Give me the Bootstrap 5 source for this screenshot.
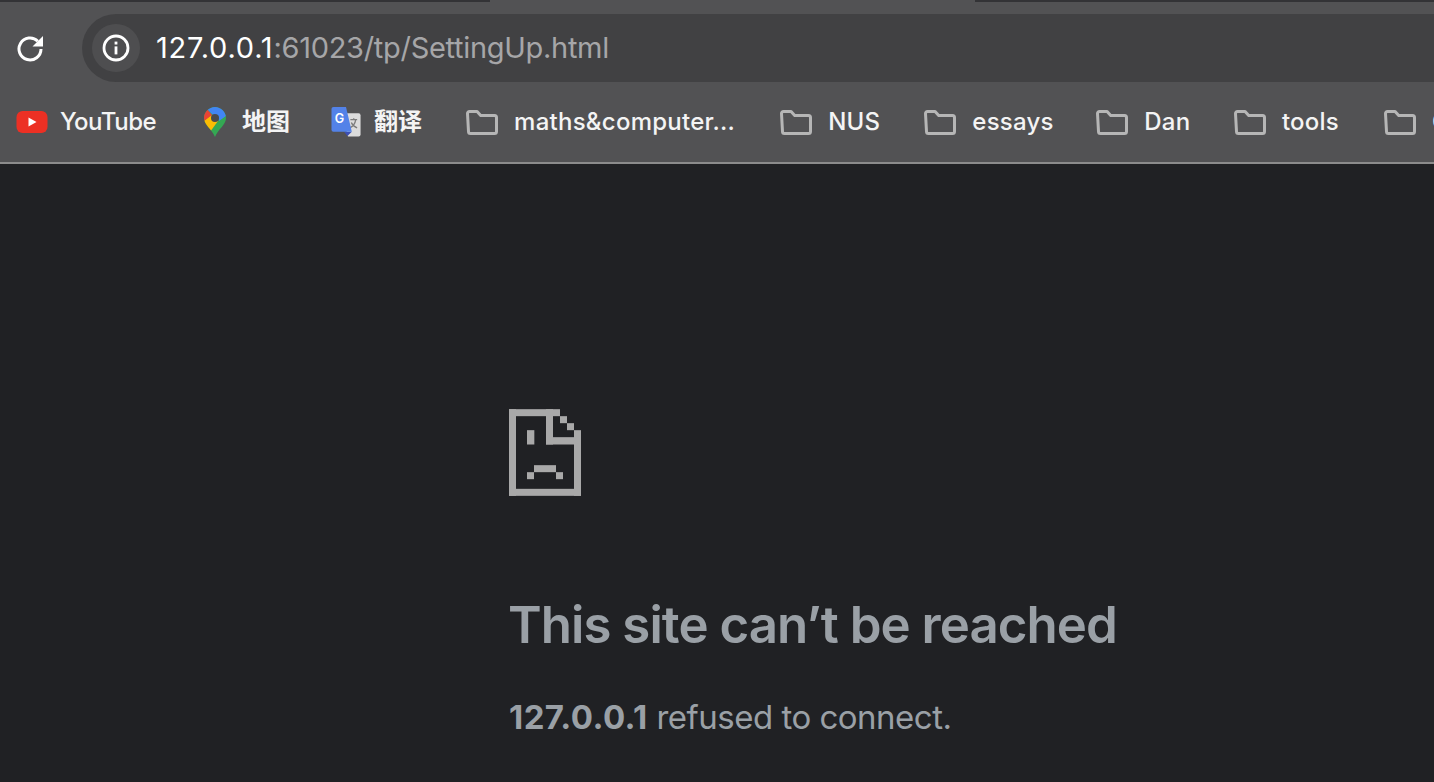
<!DOCTYPE html>
<html lang="en">
<head>
  <meta charset="UTF-8" />
  <title>127.0.0.1</title>
  <meta name="viewport" content="width=device-width, initial-scale=1" />
  <link href="https://cdn.jsdelivr.net/npm/bootstrap@5.3.0/dist/css/bootstrap.min.css" rel="stylesheet" />
  <style>
    html, body { height: 782px; overflow: hidden; }
    body {
      background: #202124;
      font-family: Inter, "Noto Sans CJK SC", sans-serif;
    }
    .tab-strip { height: 2px; background: #333336; }
    .tab-active { width: 485px; margin-left: 490px; height: 2px; background: #525254; }
    .chrome-bar { background: #525254; height: 164px; border-bottom: 2px solid #8c8c8c; overflow: hidden; }
    .top-row { height: 80px; padding-top: 12px; }
    .reload-btn { width: 82px; height: 68px; padding-left: 16px; }
    .omnibox { height: 68px; background: #414143; border-radius: 34px 0 0 34px; padding-left: 10px; }
    .info-bubble { width: 48px; height: 48px; border-radius: 50%; background: #4e4e50; }
    .url-text { font-size: 29px; color: #a6a6a8; margin-left: 16px; letter-spacing: -.3px; }
    .url-text b { font-weight: 400; color: #fff; letter-spacing: .8px; }
    .marks { height: 80px; padding-left: 16px; gap: 45px; white-space: nowrap; }
    .mark-item { gap: 16px; color: #f4f4f4; font-size: 24px; font-weight: 500; line-height: 1; letter-spacing: .25px; }
    .mark-item svg { flex: none; }
    .mark-yt { gap: 12px; letter-spacing: -.5px; margin-right: 3px; }
    .mark-maps { gap: 16px; margin-right: -4px; }
    .mark-cjk { gap: 13px; margin-right: -1px; }
    .mark-maps span, .mark-cjk span { font-weight: 600; letter-spacing: 0; }
    .mark-nus { margin-right: -1px; }
    .mark-essays { margin-right: -2.5px; }
    .mark-dan { margin-right: -1.5px; }
    .page-body { padding: 245px 0 0 509px; color: #9aa0a6; }
    .sad-file { display: block; width: 72px; height: 87px; }
    .err-title { font-size: 51px; font-weight: 600; color: #9aa0a6; margin: 97px 0 0 -1px; line-height: 64px; letter-spacing: -.95px; }
    .err-detail { font-size: 33px; margin: 40px 0 0; line-height: 40px; letter-spacing: -.5px; }
    .err-detail strong { font-weight: 700; letter-spacing: .4px; }
  </style>
</head>
<body>

<svg width="0" height="0" class="position-absolute">
  <symbol id="folder" viewBox="0 0 32 26">
    <path d="M1.500 4.500a2 2 0 0 1 2-2h7.600l3.600 4h13.800a2 2 0 0 1 2 2v14a2 2 0 0 1-2 2h-24a2 2 0 0 1-2-2z" fill="none" stroke="#b6b6b6" stroke-width="3" stroke-linejoin="round"/>
  </symbol>
  <clipPath id="pin-clip">
    <path d="M11 0C5 0 0 5 0 11 0 18 8 22 11 30 14 22 22 18 22 11 22 5 17 0 11 0z"/>
  </clipPath>
</svg>

<header class="chrome-bar">
  <div class="tab-strip"><div class="tab-active"></div></div>

  <div class="top-row d-flex">
    <div class="reload-btn d-flex align-items-center">
      <svg width="28" height="28" viewBox="0 0 28 28">
        <path d="M25 15A11 11 0 1 1 21.800 7.200" fill="none" stroke="#fff" stroke-width="3"/>
        <path d="M27 2v10.500h-10.500z" fill="#fff"/>
      </svg>
    </div>
    <div class="omnibox flex-grow-1 d-flex align-items-center">
      <div class="info-bubble d-flex align-items-center justify-content-center">
        <svg width="28" height="28" viewBox="0 0 28 28">
          <circle cx="14" cy="14" r="12" fill="none" stroke="#fff" stroke-width="2.800"/>
          <rect x="12.600" y="12.400" width="2.800" height="8" fill="#fff"/>
          <rect x="12.600" y="7.600" width="2.800" height="2.900" fill="#fff"/>
        </svg>
      </div>
      <span class="url-text"><b>127.0.0.1</b>:61023/tp/SettingUp.html</span>
    </div>
  </div>

  <nav class="marks d-flex align-items-center">
    <div class="mark-item mark-yt d-flex align-items-center">
      <svg width="32" height="24" viewBox="0 0 32 24">
        <rect x="0.500" y="1" width="31" height="22" rx="6" fill="#ec3024"/>
        <path d="M12.500 7.500v9l8-4.500z" fill="#fff"/>
      </svg>
      <span>YouTube</span>
    </div>
    <div class="mark-item mark-maps d-flex align-items-center">
      <svg width="22" height="30" viewBox="0 0 22 30">
        <g clip-path="url(#pin-clip)">
          <rect width="22" height="30" fill="#34a853"/>
          <polygon points="0,14 7,8 14,14 6,25 0,22" fill="#fbbc04"/>
          <polygon points="0,14 8,8 3,2 0,5" fill="#ea4335"/>
          <polygon points="3,2 9,8 14,8 15,14 22,9 22,0 3,0" fill="#4285f4"/>
        </g>
        <circle cx="11" cy="11" r="4" fill="#4a4a4c"/>
      </svg>
      <span>地图</span>
    </div>
    <div class="mark-item mark-cjk d-flex align-items-center">
      <svg width="30" height="31" viewBox="0 0 30 32">
        <path d="M11 6.500h17a2 2 0 0 1 2 2v20a2 2 0 0 1-2 2h-11z" fill="#dcdcdc"/>
        <path d="M19.500 13h7M23 11.500V13M25 13c-.5 4-3 7-6 8.500M20.500 16c1 2.500 3 4.500 6 5.500" fill="none" stroke="#7c7c7c" stroke-width="1.300"/>
        <path d="M13 25.500l3.500 4.500 4.500-4.500z" fill="#3c4fb4"/>
        <path d="M2 0h13l6 25.500H2a2 2 0 0 1-2-2V2a2 2 0 0 1 2-2z" fill="#5382e8"/>
        <text x="3.500" y="17" font-size="13" font-weight="600" fill="#fff" font-family="Inter, sans-serif">G</text>
      </svg>
      <span>翻译</span>
    </div>
    <div class="mark-item d-flex align-items-center"><svg width="32" height="26"><use href="#folder"/></svg><span>maths&amp;computer...</span></div>
    <div class="mark-item mark-nus d-flex align-items-center"><svg width="32" height="26"><use href="#folder"/></svg><span>NUS</span></div>
    <div class="mark-item mark-essays d-flex align-items-center"><svg width="32" height="26"><use href="#folder"/></svg><span>essays</span></div>
    <div class="mark-item mark-dan d-flex align-items-center"><svg width="32" height="26"><use href="#folder"/></svg><span>Dan</span></div>
    <div class="mark-item d-flex align-items-center"><svg width="32" height="26"><use href="#folder"/></svg><span>tools</span></div>
    <div class="mark-item d-flex align-items-center"><svg width="32" height="26"><use href="#folder"/></svg><span>CS</span></div>
  </nav>
</header>

<main class="page-body">
  <svg class="sad-file" viewBox="42 42 216 260" fill="#a9a9a9">
    <rect x="42" y="42" width="153" height="21"/>
    <rect x="42" y="42" width="21" height="260"/>
    <rect x="42" y="281" width="216" height="21"/>
    <rect x="237" y="105" width="21" height="197"/>
    <rect x="153" y="42" width="21" height="106"/>
    <rect x="153" y="126" width="105" height="22"/>
    <rect x="195" y="63" width="21" height="21"/>
    <rect x="216" y="84" width="21" height="21"/>
    <rect x="96" y="105" width="22" height="43"/>
    <rect x="117" y="210" width="66" height="21"/>
    <rect x="96" y="231" width="21" height="21"/>
    <rect x="183" y="231" width="21" height="21"/>
  </svg>
  <h1 class="err-title">This site can’t be reached</h1>
  <p class="err-detail"><strong>127.0.0.1</strong> refused to connect.</p>
</main>

</body>
</html>
